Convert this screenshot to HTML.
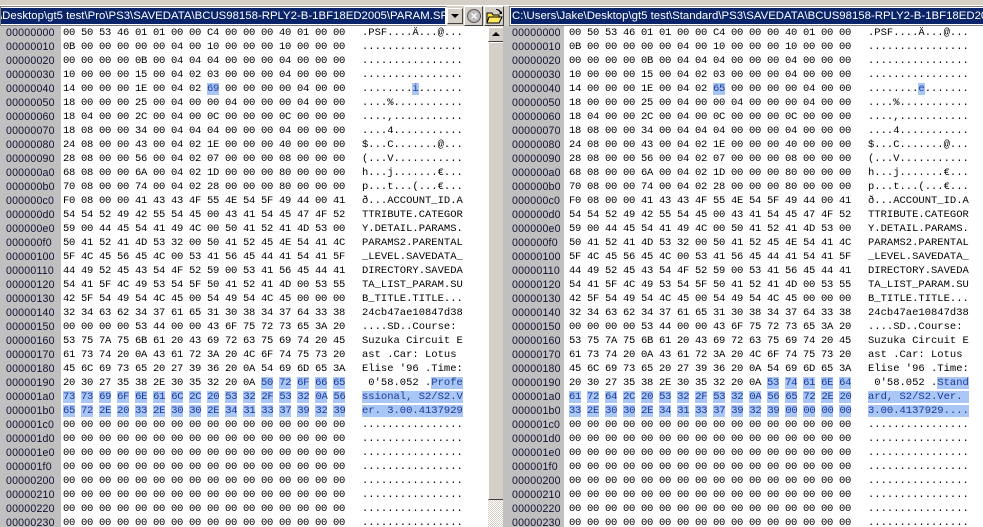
<!DOCTYPE html>
<html><head><meta charset="utf-8"><style>
*{margin:0;padding:0;box-sizing:border-box}
body{width:983px;height:527px;overflow:hidden;background:#d4d0c8;position:relative;font-family:"Liberation Sans",sans-serif}
.top{position:absolute;left:0;top:0;width:983px;height:6px;background:#d4d0c8;border-bottom:1px solid #fff}
.tb{position:absolute;top:6px;height:20px;background:#fff;border:1px solid #808080;border-right-color:#fff;overflow:hidden}
.tb div{position:absolute;left:1px;top:1px;bottom:1px;right:1px;background:#0a246a;color:#fff;font-size:11.4px;line-height:16px;white-space:nowrap;padding-left:1px}
.btn{position:absolute;background:#d4d0c8;border:1px solid;border-color:#fff #404040 #404040 #fff}
.pane{position:absolute;top:26px;height:501px;background:#fff;overflow:hidden}
.addr{position:absolute;left:0;top:0;width:61px;height:501px;background:#c0c0c0}
.r{position:absolute;left:0;height:14px;line-height:14px;white-space:pre;margin-top:3px}
.a{position:absolute;left:6px;font-size:10.6px;color:#101030;font-family:"Liberation Sans",sans-serif;letter-spacing:0.2px}
.h{position:absolute;left:63px;font-family:"Liberation Mono",monospace;font-size:10.5px;letter-spacing:-0.3px;color:#000}
.t{position:absolute;left:362px;font-family:"Liberation Mono",monospace;font-size:10.5px;color:#000}
s{text-decoration:none;background:#a9c6f5;color:#1a3a9a}
.sb{position:absolute;left:488px;top:26px;width:16px;height:501px;background:repeating-conic-gradient(#fff 0 25%,#d4d0c8 0 50%) 0 0/2px 2px}
</style></head><body>
<div class="top"></div>
<div class="tb" style="left:0;width:447px"><div style="left:0;text-indent:-3px">\Desktop\gt5 test\Pro\PS3\SAVEDATA\BCUS98158-RPLY2-B-1BF18ED2005\PARAM.SFO</div></div>
<div class="btn" style="left:447px;top:8px;width:16px;height:16px"><div style="position:absolute;left:3px;top:5px;border-left:4px solid transparent;border-right:4px solid transparent;border-top:4px solid #000"></div></div>
<div class="btn" style="left:464px;top:6px;width:19px;height:20px"><div style="position:absolute;left:2px;top:2px;width:14px;height:14px;border-radius:50%;background:#bbb;border:1px solid #555;color:#fff;font-size:12px;line-height:12px;text-align:center;font-weight:bold">×</div></div>
<div class="btn" style="left:484px;top:6px;width:20px;height:20px"><svg width="18" height="18" style="position:absolute;left:0;top:0"><path d="M2 6h5l1 2h6v8H2z" fill="#ffe040" stroke="#000" stroke-width="1"/><path d="M4 10h13l-3 6H2z" fill="#ffe860" stroke="#000"/><path d="M11 2c3 0 4 1 5 3l1-1v3h-3l1-1c-1-2-2-3-4-3" fill="#000"/></svg></div>
<div class="tb" style="left:509px;width:480px"><div>C:\Users\Jake\Desktop\gt5 test\Standard\PS3\SAVEDATA\BCUS98158-RPLY2-B-1BF18ED2004</div></div>

<div class="pane" style="left:0;width:488px">
<div class="addr"></div>
<div class="r" style="top:-3px"><span class="a">00000000</span><span class="h">00 50 53 46 01 01 00 00 C4 00 00 00 40 01 00 00</span><span class="t">.PSF....Ä...@...</span></div>
<div class="r" style="top:11px"><span class="a">00000010</span><span class="h">0B 00 00 00 00 00 04 00 10 00 00 00 10 00 00 00</span><span class="t">................</span></div>
<div class="r" style="top:25px"><span class="a">00000020</span><span class="h">00 00 00 00 0B 00 04 04 04 00 00 00 04 00 00 00</span><span class="t">................</span></div>
<div class="r" style="top:39px"><span class="a">00000030</span><span class="h">10 00 00 00 15 00 04 02 03 00 00 00 04 00 00 00</span><span class="t">................</span></div>
<div class="r" style="top:53px"><span class="a">00000040</span><span class="h">14 00 00 00 1E 00 04 02 <s>69</s> 00 00 00 00 04 00 00</span><span class="t">........<s>i</s>.......</span></div>
<div class="r" style="top:67px"><span class="a">00000050</span><span class="h">18 00 00 00 25 00 04 00 00 04 00 00 00 04 00 00</span><span class="t">....%...........</span></div>
<div class="r" style="top:81px"><span class="a">00000060</span><span class="h">18 04 00 00 2C 00 04 00 0C 00 00 00 0C 00 00 00</span><span class="t">....,...........</span></div>
<div class="r" style="top:95px"><span class="a">00000070</span><span class="h">18 08 00 00 34 00 04 04 04 00 00 00 04 00 00 00</span><span class="t">....4...........</span></div>
<div class="r" style="top:109px"><span class="a">00000080</span><span class="h">24 08 00 00 43 00 04 02 1E 00 00 00 40 00 00 00</span><span class="t">$...C.......@...</span></div>
<div class="r" style="top:123px"><span class="a">00000090</span><span class="h">28 08 00 00 56 00 04 02 07 00 00 00 08 00 00 00</span><span class="t">(...V...........</span></div>
<div class="r" style="top:137px"><span class="a">000000a0</span><span class="h">68 08 00 00 6A 00 04 02 1D 00 00 00 80 00 00 00</span><span class="t">h...j.......€...</span></div>
<div class="r" style="top:151px"><span class="a">000000b0</span><span class="h">70 08 00 00 74 00 04 02 28 00 00 00 80 00 00 00</span><span class="t">p...t...(...€...</span></div>
<div class="r" style="top:165px"><span class="a">000000c0</span><span class="h">F0 08 00 00 41 43 43 4F 55 4E 54 5F 49 44 00 41</span><span class="t">ð...ACCOUNT_ID.A</span></div>
<div class="r" style="top:179px"><span class="a">000000d0</span><span class="h">54 54 52 49 42 55 54 45 00 43 41 54 45 47 4F 52</span><span class="t">TTRIBUTE.CATEGOR</span></div>
<div class="r" style="top:193px"><span class="a">000000e0</span><span class="h">59 00 44 45 54 41 49 4C 00 50 41 52 41 4D 53 00</span><span class="t">Y.DETAIL.PARAMS.</span></div>
<div class="r" style="top:207px"><span class="a">000000f0</span><span class="h">50 41 52 41 4D 53 32 00 50 41 52 45 4E 54 41 4C</span><span class="t">PARAMS2.PARENTAL</span></div>
<div class="r" style="top:221px"><span class="a">00000100</span><span class="h">5F 4C 45 56 45 4C 00 53 41 56 45 44 41 54 41 5F</span><span class="t">_LEVEL.SAVEDATA_</span></div>
<div class="r" style="top:235px"><span class="a">00000110</span><span class="h">44 49 52 45 43 54 4F 52 59 00 53 41 56 45 44 41</span><span class="t">DIRECTORY.SAVEDA</span></div>
<div class="r" style="top:249px"><span class="a">00000120</span><span class="h">54 41 5F 4C 49 53 54 5F 50 41 52 41 4D 00 53 55</span><span class="t">TA_LIST_PARAM.SU</span></div>
<div class="r" style="top:263px"><span class="a">00000130</span><span class="h">42 5F 54 49 54 4C 45 00 54 49 54 4C 45 00 00 00</span><span class="t">B_TITLE.TITLE...</span></div>
<div class="r" style="top:277px"><span class="a">00000140</span><span class="h">32 34 63 62 34 37 61 65 31 30 38 34 37 64 33 38</span><span class="t">24cb47ae10847d38</span></div>
<div class="r" style="top:291px"><span class="a">00000150</span><span class="h">00 00 00 00 53 44 00 00 43 6F 75 72 73 65 3A 20</span><span class="t">....SD..Course: </span></div>
<div class="r" style="top:305px"><span class="a">00000160</span><span class="h">53 75 7A 75 6B 61 20 43 69 72 63 75 69 74 20 45</span><span class="t">Suzuka Circuit E</span></div>
<div class="r" style="top:319px"><span class="a">00000170</span><span class="h">61 73 74 20 0A 43 61 72 3A 20 4C 6F 74 75 73 20</span><span class="t">ast .Car: Lotus </span></div>
<div class="r" style="top:333px"><span class="a">00000180</span><span class="h">45 6C 69 73 65 20 27 39 36 20 0A 54 69 6D 65 3A</span><span class="t">Elise '96 .Time:</span></div>
<div class="r" style="top:347px"><span class="a">00000190</span><span class="h">20 30 27 35 38 2E 30 35 32 20 0A <s>50</s> <s>72</s> <s>6F</s> <s>66</s> <s>65</s></span><span class="t"> 0'58.052 .<s>Profe</s></span></div>
<div class="r" style="top:361px"><span class="a">000001a0</span><span class="h"><s>73</s> <s>73</s> <s>69</s> <s>6F</s> <s>6E</s> <s>61</s> <s>6C</s> <s>2C</s> <s>20</s> <s>53</s> <s>32</s> <s>2F</s> <s>53</s> <s>32</s> <s>0A</s> <s>56</s></span><span class="t"><s>ssional, S2/S2.V</s></span></div>
<div class="r" style="top:375px"><span class="a">000001b0</span><span class="h"><s>65</s> <s>72</s> <s>2E</s> <s>20</s> <s>33</s> <s>2E</s> <s>30</s> <s>30</s> <s>2E</s> <s>34</s> <s>31</s> <s>33</s> <s>37</s> <s>39</s> <s>32</s> <s>39</s></span><span class="t"><s>er. 3.00.4137929</s></span></div>
<div class="r" style="top:389px"><span class="a">000001c0</span><span class="h">00 00 00 00 00 00 00 00 00 00 00 00 00 00 00 00</span><span class="t">................</span></div>
<div class="r" style="top:403px"><span class="a">000001d0</span><span class="h">00 00 00 00 00 00 00 00 00 00 00 00 00 00 00 00</span><span class="t">................</span></div>
<div class="r" style="top:417px"><span class="a">000001e0</span><span class="h">00 00 00 00 00 00 00 00 00 00 00 00 00 00 00 00</span><span class="t">................</span></div>
<div class="r" style="top:431px"><span class="a">000001f0</span><span class="h">00 00 00 00 00 00 00 00 00 00 00 00 00 00 00 00</span><span class="t">................</span></div>
<div class="r" style="top:445px"><span class="a">00000200</span><span class="h">00 00 00 00 00 00 00 00 00 00 00 00 00 00 00 00</span><span class="t">................</span></div>
<div class="r" style="top:459px"><span class="a">00000210</span><span class="h">00 00 00 00 00 00 00 00 00 00 00 00 00 00 00 00</span><span class="t">................</span></div>
<div class="r" style="top:473px"><span class="a">00000220</span><span class="h">00 00 00 00 00 00 00 00 00 00 00 00 00 00 00 00</span><span class="t">................</span></div>
<div class="r" style="top:487px"><span class="a">00000230</span><span class="h">00 00 00 00 00 00 00 00 00 00 00 00 00 00 00 00</span><span class="t">................</span></div>
</div>

<div class="sb">
<div class="btn" style="left:0;top:1px;width:16px;height:15px"><div style="position:absolute;left:3px;top:4px;border-left:4px solid transparent;border-right:4px solid transparent;border-bottom:4px solid #000"></div></div>
<div class="btn" style="left:0;top:16px;width:16px;height:458px"></div>
</div>

<div class="pane" style="left:503px;width:480px">
<div class="addr"></div>
<div style="position:absolute;left:3px;top:0">
<div class="r" style="top:-3px"><span class="a">00000000</span><span class="h">00 50 53 46 01 01 00 00 C4 00 00 00 40 01 00 00</span><span class="t">.PSF....Ä...@...</span></div>
<div class="r" style="top:11px"><span class="a">00000010</span><span class="h">0B 00 00 00 00 00 04 00 10 00 00 00 10 00 00 00</span><span class="t">................</span></div>
<div class="r" style="top:25px"><span class="a">00000020</span><span class="h">00 00 00 00 0B 00 04 04 04 00 00 00 04 00 00 00</span><span class="t">................</span></div>
<div class="r" style="top:39px"><span class="a">00000030</span><span class="h">10 00 00 00 15 00 04 02 03 00 00 00 04 00 00 00</span><span class="t">................</span></div>
<div class="r" style="top:53px"><span class="a">00000040</span><span class="h">14 00 00 00 1E 00 04 02 <s>65</s> 00 00 00 00 04 00 00</span><span class="t">........<s>e</s>.......</span></div>
<div class="r" style="top:67px"><span class="a">00000050</span><span class="h">18 00 00 00 25 00 04 00 00 04 00 00 00 04 00 00</span><span class="t">....%...........</span></div>
<div class="r" style="top:81px"><span class="a">00000060</span><span class="h">18 04 00 00 2C 00 04 00 0C 00 00 00 0C 00 00 00</span><span class="t">....,...........</span></div>
<div class="r" style="top:95px"><span class="a">00000070</span><span class="h">18 08 00 00 34 00 04 04 04 00 00 00 04 00 00 00</span><span class="t">....4...........</span></div>
<div class="r" style="top:109px"><span class="a">00000080</span><span class="h">24 08 00 00 43 00 04 02 1E 00 00 00 40 00 00 00</span><span class="t">$...C.......@...</span></div>
<div class="r" style="top:123px"><span class="a">00000090</span><span class="h">28 08 00 00 56 00 04 02 07 00 00 00 08 00 00 00</span><span class="t">(...V...........</span></div>
<div class="r" style="top:137px"><span class="a">000000a0</span><span class="h">68 08 00 00 6A 00 04 02 1D 00 00 00 80 00 00 00</span><span class="t">h...j.......€...</span></div>
<div class="r" style="top:151px"><span class="a">000000b0</span><span class="h">70 08 00 00 74 00 04 02 28 00 00 00 80 00 00 00</span><span class="t">p...t...(...€...</span></div>
<div class="r" style="top:165px"><span class="a">000000c0</span><span class="h">F0 08 00 00 41 43 43 4F 55 4E 54 5F 49 44 00 41</span><span class="t">ð...ACCOUNT_ID.A</span></div>
<div class="r" style="top:179px"><span class="a">000000d0</span><span class="h">54 54 52 49 42 55 54 45 00 43 41 54 45 47 4F 52</span><span class="t">TTRIBUTE.CATEGOR</span></div>
<div class="r" style="top:193px"><span class="a">000000e0</span><span class="h">59 00 44 45 54 41 49 4C 00 50 41 52 41 4D 53 00</span><span class="t">Y.DETAIL.PARAMS.</span></div>
<div class="r" style="top:207px"><span class="a">000000f0</span><span class="h">50 41 52 41 4D 53 32 00 50 41 52 45 4E 54 41 4C</span><span class="t">PARAMS2.PARENTAL</span></div>
<div class="r" style="top:221px"><span class="a">00000100</span><span class="h">5F 4C 45 56 45 4C 00 53 41 56 45 44 41 54 41 5F</span><span class="t">_LEVEL.SAVEDATA_</span></div>
<div class="r" style="top:235px"><span class="a">00000110</span><span class="h">44 49 52 45 43 54 4F 52 59 00 53 41 56 45 44 41</span><span class="t">DIRECTORY.SAVEDA</span></div>
<div class="r" style="top:249px"><span class="a">00000120</span><span class="h">54 41 5F 4C 49 53 54 5F 50 41 52 41 4D 00 53 55</span><span class="t">TA_LIST_PARAM.SU</span></div>
<div class="r" style="top:263px"><span class="a">00000130</span><span class="h">42 5F 54 49 54 4C 45 00 54 49 54 4C 45 00 00 00</span><span class="t">B_TITLE.TITLE...</span></div>
<div class="r" style="top:277px"><span class="a">00000140</span><span class="h">32 34 63 62 34 37 61 65 31 30 38 34 37 64 33 38</span><span class="t">24cb47ae10847d38</span></div>
<div class="r" style="top:291px"><span class="a">00000150</span><span class="h">00 00 00 00 53 44 00 00 43 6F 75 72 73 65 3A 20</span><span class="t">....SD..Course: </span></div>
<div class="r" style="top:305px"><span class="a">00000160</span><span class="h">53 75 7A 75 6B 61 20 43 69 72 63 75 69 74 20 45</span><span class="t">Suzuka Circuit E</span></div>
<div class="r" style="top:319px"><span class="a">00000170</span><span class="h">61 73 74 20 0A 43 61 72 3A 20 4C 6F 74 75 73 20</span><span class="t">ast .Car: Lotus </span></div>
<div class="r" style="top:333px"><span class="a">00000180</span><span class="h">45 6C 69 73 65 20 27 39 36 20 0A 54 69 6D 65 3A</span><span class="t">Elise '96 .Time:</span></div>
<div class="r" style="top:347px"><span class="a">00000190</span><span class="h">20 30 27 35 38 2E 30 35 32 20 0A <s>53</s> <s>74</s> <s>61</s> <s>6E</s> <s>64</s></span><span class="t"> 0'58.052 .<s>Stand</s></span></div>
<div class="r" style="top:361px"><span class="a">000001a0</span><span class="h"><s>61</s> <s>72</s> <s>64</s> <s>2C</s> <s>20</s> <s>53</s> <s>32</s> <s>2F</s> <s>53</s> <s>32</s> <s>0A</s> <s>56</s> <s>65</s> <s>72</s> <s>2E</s> <s>20</s></span><span class="t"><s>ard, S2/S2.Ver. </s></span></div>
<div class="r" style="top:375px"><span class="a">000001b0</span><span class="h"><s>33</s> <s>2E</s> <s>30</s> <s>30</s> <s>2E</s> <s>34</s> <s>31</s> <s>33</s> <s>37</s> <s>39</s> <s>32</s> <s>39</s> <s>00</s> <s>00</s> <s>00</s> <s>00</s></span><span class="t"><s>3.00.4137929....</s></span></div>
<div class="r" style="top:389px"><span class="a">000001c0</span><span class="h">00 00 00 00 00 00 00 00 00 00 00 00 00 00 00 00</span><span class="t">................</span></div>
<div class="r" style="top:403px"><span class="a">000001d0</span><span class="h">00 00 00 00 00 00 00 00 00 00 00 00 00 00 00 00</span><span class="t">................</span></div>
<div class="r" style="top:417px"><span class="a">000001e0</span><span class="h">00 00 00 00 00 00 00 00 00 00 00 00 00 00 00 00</span><span class="t">................</span></div>
<div class="r" style="top:431px"><span class="a">000001f0</span><span class="h">00 00 00 00 00 00 00 00 00 00 00 00 00 00 00 00</span><span class="t">................</span></div>
<div class="r" style="top:445px"><span class="a">00000200</span><span class="h">00 00 00 00 00 00 00 00 00 00 00 00 00 00 00 00</span><span class="t">................</span></div>
<div class="r" style="top:459px"><span class="a">00000210</span><span class="h">00 00 00 00 00 00 00 00 00 00 00 00 00 00 00 00</span><span class="t">................</span></div>
<div class="r" style="top:473px"><span class="a">00000220</span><span class="h">00 00 00 00 00 00 00 00 00 00 00 00 00 00 00 00</span><span class="t">................</span></div>
<div class="r" style="top:487px"><span class="a">00000230</span><span class="h">00 00 00 00 00 00 00 00 00 00 00 00 00 00 00 00</span><span class="t">................</span></div>
</div>
</div>
</body></html>
